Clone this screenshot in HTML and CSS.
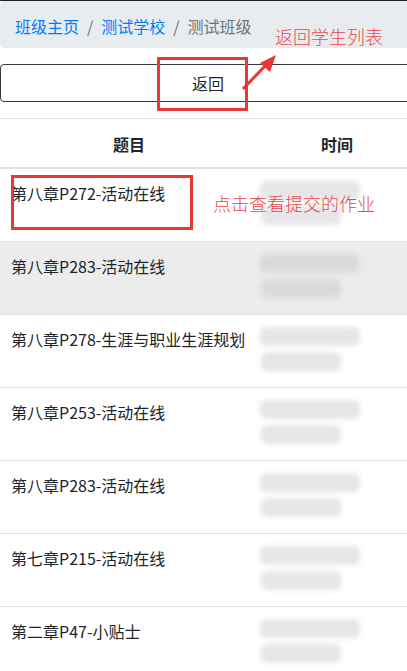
FILE: index.html
```html
<!DOCTYPE html>
<html lang="zh">
<head>
    <meta charset="UTF-8">
    <meta name="viewport" content="width=device-width, initial-scale=1.0">
    <title>测试班级</title>
    <link rel="stylesheet" href="styles.css">
</head>
<body>
    <div class="page">
        <ol class="breadcrumb">
            <li><a href="#">班级主页</a></li>
            <li><a href="#">测试学校</a></li>
            <li class="active">测试班级</li>
        </ol>

        <button class="btn-back">返回</button>

        <table class="table">
            <thead>
                <tr>
                    <th class="col-title">题目</th>
                    <th>时间</th>
                </tr>
            </thead>
            <tbody>
                <tr>
                    <td>第八章P272-活动在线</td>
                    <td><div class="blur"><span class="b1"></span><span class="b2"></span></div></td>
                </tr>
                <tr class="hover">
                    <td>第八章P283-活动在线</td>
                    <td><div class="blur"><span class="b1"></span><span class="b2"></span></div></td>
                </tr>
                <tr>
                    <td>第八章P278-生涯与职业生涯规划</td>
                    <td><div class="blur"><span class="b1"></span><span class="b2"></span></div></td>
                </tr>
                <tr>
                    <td>第八章P253-活动在线</td>
                    <td><div class="blur"><span class="b1"></span><span class="b2"></span></div></td>
                </tr>
                <tr>
                    <td>第八章P283-活动在线</td>
                    <td><div class="blur"><span class="b1"></span><span class="b2"></span></div></td>
                </tr>
                <tr>
                    <td>第七章P215-活动在线</td>
                    <td><div class="blur"><span class="b1"></span><span class="b2"></span></div></td>
                </tr>
                <tr>
                    <td>第二章P47-小贴士</td>
                    <td><div class="blur"><span class="b1"></span><span class="b2"></span></div></td>
                </tr>
            </tbody>
        </table>

        <!-- 标注 -->
        <div class="mark mark-btn"></div>
        <div class="note note-back">返回学生列表</div>
        <svg class="arrow" width="40" height="40" viewBox="0 0 40 40">
            <line x1="3" y1="36" x2="26" y2="12" stroke="#e53935" stroke-width="3"/>
            <polygon points="36,2 20,10 30,19" fill="#e53935"/>
        </svg>
        <div class="mark mark-row"></div>
        <div class="note note-row">点击查看提交的作业</div>
    </div>
</body>
</html>
```

FILE: styles.css
```css
body {
    margin: 0;
    overflow: hidden;
    font-family: "Noto Sans CJK SC", "Noto Sans", sans-serif;
    font-size: 16px;
    line-height: 24px;
    color: #212529;
    background-color: #fff;
    border-top: 1px solid #222;
}
.page {
    position: relative;
    width: 416px;
}
.breadcrumb {
    display: flex;
    list-style: none;
    margin: 0 0 16px 0;
    padding: 13px 15px 10px;
    background-color: #e9ecef;
    border-radius: 4px;
}
.breadcrumb li + li::before {
    content: "/";
    padding: 0 8px;
    color: #6c757d;
}
.breadcrumb a {
    color: #007bff;
    text-decoration: none;
}
.breadcrumb .active {
    color: #6c757d;
}
.btn-back {
    display: block;
    width: 100%;
    height: 38px;
    margin: 0 0 16px 0;
    padding: 6px 12px;
    font-family: inherit;
    font-size: 16px;
    color: #212529;
    background: #fff;
    border: 1px solid #343a40;
    border-radius: 4px;
}
.table {
    width: 100%;
    border-collapse: collapse;
}
.table th,
.table td {
    height: 48px;
    padding: 12px 11px;
    border-top: 1px solid #dee2e6;
    vertical-align: top;
}
.table th {
    height: 24px;
    padding-top: 13px;
    padding-bottom: 11px;
    text-align: center;
    font-weight: bold;
    border-bottom: 2px solid #dee2e6;
}
.table .col-title {
    width: 236px;
}
.table td:first-child {
    white-space: nowrap;
}
.table td + td {
    padding-left: 2px;
}
.table tr.hover td {
    background-color: #ececec;
}
.blur {
    display: flex;
    flex-direction: column;
    gap: 6px;
    height: 48px;
    width: 110px;
    filter: blur(2.5px);
}
.blur span {
    height: 19px;
    background-color: #e6e6e8;
    border-radius: 6px;
}
.blur .b1 {
    width: 100px;
}
.blur .b2 {
    width: 80px;
    margin-left: 1px;
}
.hover .blur span {
    background-color: #dadadc;
}
.mark {
    position: absolute;
    border: 3px solid #e53935;
}
.mark-btn {
    left: 157px;
    top: 56px;
    width: 85px;
    height: 48px;
}
.mark-row {
    left: 11px;
    top: 174px;
    width: 176px;
    height: 49px;
}
.note {
    position: absolute;
    color: #e8474a;
    font-size: 18px;
    line-height: 1;
    font-weight: 300;
    white-space: nowrap;
}
.note-back {
    left: 275px;
    top: 26px;
}
.note-row {
    left: 213px;
    top: 193px;
}
.arrow {
    position: absolute;
    left: 240px;
    top: 52px;
}
```
